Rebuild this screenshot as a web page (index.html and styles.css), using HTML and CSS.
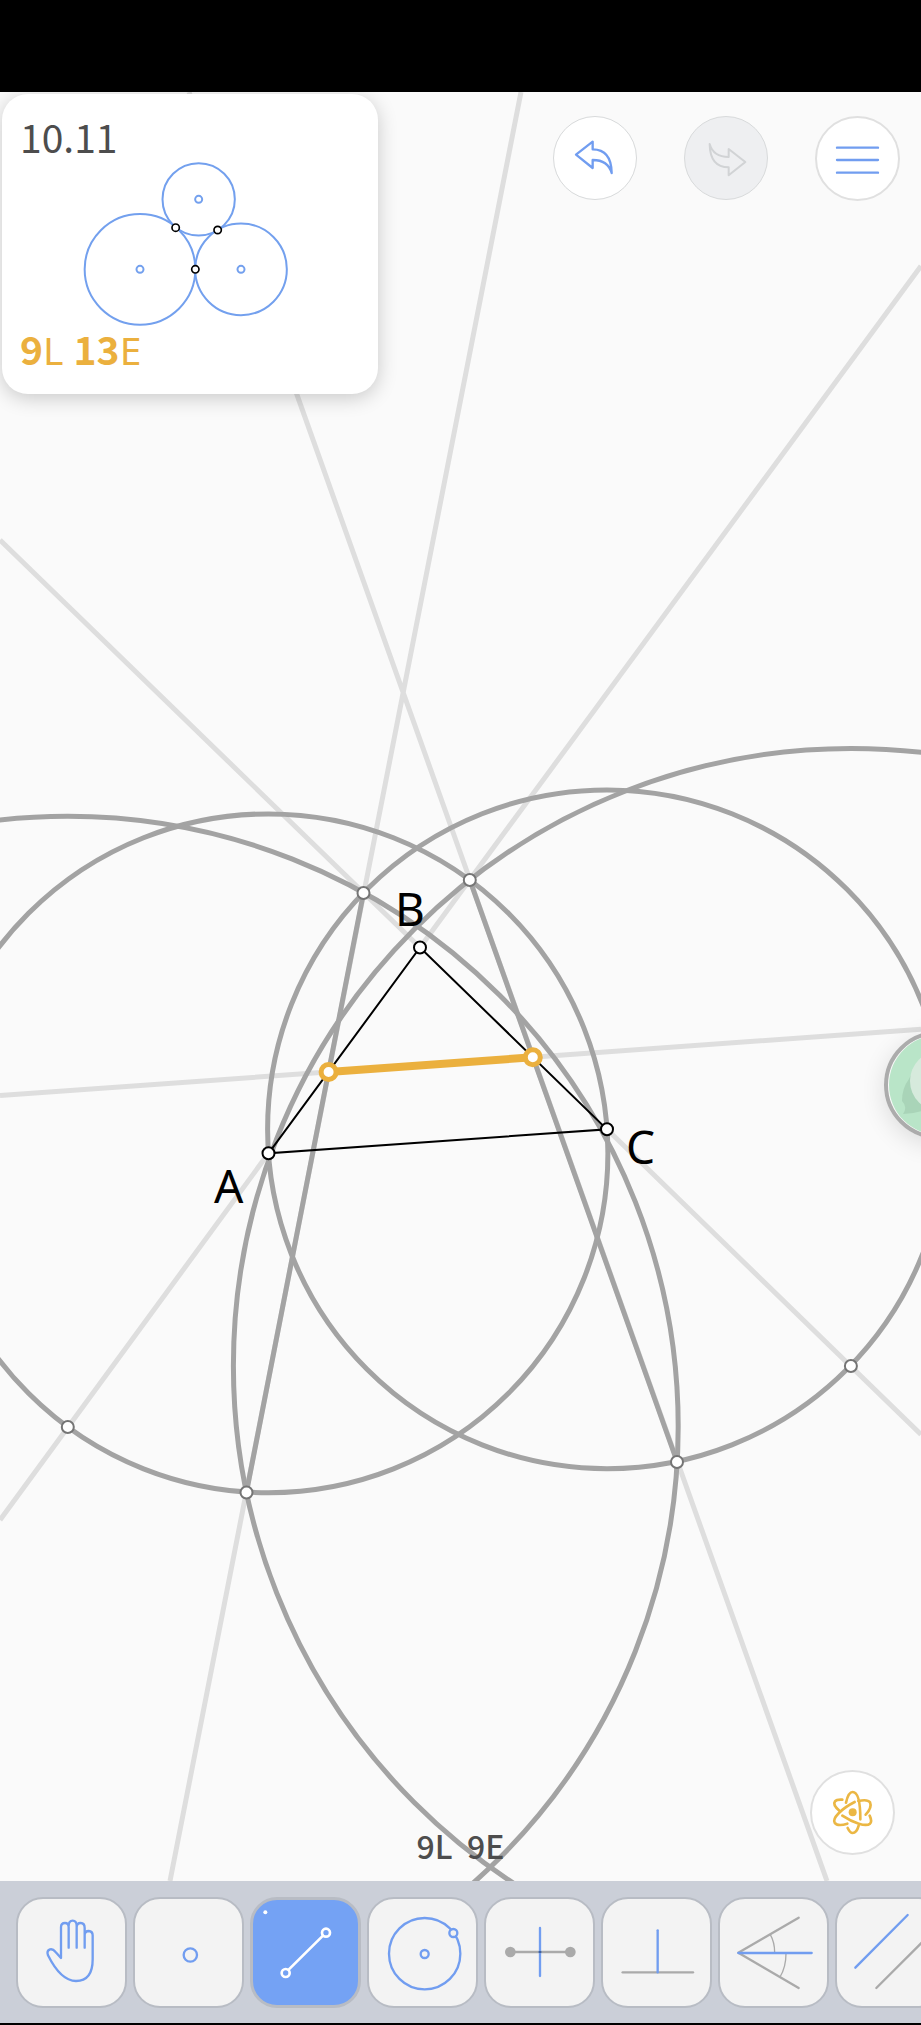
FILE: index.html
```html
<!DOCTYPE html>
<html lang="en">
<head>
<meta charset="utf-8">
<meta name="viewport" content="width=device-width, initial-scale=1">
<title>10.11</title>
<link rel="stylesheet" href="styles.css">
</head>
<body>
<header class="status-bar"></header>
<main class="stage">
  <svg class="drawing" viewBox="0 92 921 1789" preserveAspectRatio="xMidYMid slice" role="img" aria-label="Geometric construction on triangle ABC">
    <g class="guide">
      <path d="M521 92L170 1881M189 92L827 1881M0 540L420 947.500M607 1129.300L921 1434.500M921 266L420 947.500M268.500 1153.300L0 1520M0 1095.600L921 1029.300"/>
    </g>
    <g class="construct">
      <circle cx="268.500" cy="1153.300" r="339.400"/>
      <circle cx="607" cy="1129.300" r="339.400"/>
      <circle cx="850.900" cy="1365.900" r="617.500"/>
      <circle cx="67.800" cy="1426.600" r="610.400"/>
      <path d="M363.500 893L246.500 1492M469.800 880L677 1461.500"/>
    </g>
    <path class="triangle" d="M268.500 1153.300L420 947.500L607 1129.300Z"/>
    <path class="answer" d="M328.600 1072L532.800 1057.300"/>
    <g class="helper-point">
      <circle cx="363.500" cy="893" r="6"/>
      <circle cx="469.800" cy="880" r="6"/>
      <circle cx="246.500" cy="1492.500" r="6"/>
      <circle cx="677" cy="1462" r="6"/>
      <circle cx="67.800" cy="1427" r="6"/>
      <circle cx="850.900" cy="1366" r="6"/>
    </g>
    <g class="given-point">
      <circle cx="268.500" cy="1153.300" r="6"/>
      <circle cx="420" cy="947.500" r="6"/>
      <circle cx="607" cy="1129.300" r="6"/>
    </g>
    <g class="answer-point">
      <circle cx="328.600" cy="1072" r="7.500"/>
      <circle cx="532.800" cy="1057.300" r="7.500"/>
    </g>
    <g class="label">
      <text x="214" y="1203">A</text>
      <text x="395" y="926">B</text>
      <text x="626" y="1164">C</text>
    </g>
  </svg>

  <div class="hud">
    <div class="top-row">
      <section class="goal">
        <h1 class="goal-title">10.11</h1>
        <svg class="goal-figure" viewBox="60 240 1020 510" aria-hidden="true">
          <g class="fig-line">
            <circle cx="596" cy="358" r="108.500"/>
            <circle cx="420" cy="568" r="166"/>
            <circle cx="723" cy="568" r="137.500"/>
            <circle cx="596" cy="358" r="10.500"/>
            <circle cx="420" cy="568" r="10.500"/>
            <circle cx="723" cy="568" r="10.500"/>
          </g>
          <g class="fig-touch">
            <circle cx="527" cy="443" r="11"/>
            <circle cx="653" cy="450" r="11"/>
            <circle cx="586" cy="568" r="11"/>
          </g>
        </svg>
        <p class="goal-cost"><b>9</b>L <b>13</b>E</p>
      </section>
      <nav class="actions" aria-label="Actions">
        <button class="round" type="button" aria-label="Undo">
          <svg class="round-icon" viewBox="97 108 252 252" aria-hidden="true"><path class="blue" d="M166 224L216 185V208Q272 208 273 279Q262 240 216 240V264Z"/></svg>
        </button>
        <button class="round round-off" type="button" aria-label="Redo" disabled>
          <svg class="round-icon" viewBox="493 108 252 252" aria-hidden="true"><path class="pale" d="M677 246L627 207V231Q581 231 570 192Q571 262 627 262V286Z"/></svg>
        </button>
        <button class="round round-thick" type="button" aria-label="Menu">
          <svg class="round-icon" viewBox="885 107 255 255" aria-hidden="true"><path class="blue" d="M951 202H1074M951 239H1074M951 277H1074"/></svg>
        </button>
      </nav>
    </div>
    <div class="bottom-row">
      <p class="score">9L  9E</p>
      <button class="round round-thick explore" type="button" aria-label="Explore">
        <svg class="round-icon" viewBox="90 90 255 255" aria-hidden="true">
          <circle class="gold-dot" cx="218" cy="217" r="12"/>
          <g class="gold">
            <path d="M198 188Q205 156 218 156C234 156 241 184 241 238M236 257Q230 279 218 279Q210 279 203 264"/>
            <path d="M224 186C184 206 156 235 164 248Q172 260 202 251M257 224Q277 203 270 187Q263 177 235 183"/>
            <path d="M187 227C220 249 258 261 270 251Q277 244 269 227M179 213Q157 195 165 184Q170 178 187 179"/>
          </g>
        </svg>
      </button>
    </div>
  </div>
  <button class="bubble" type="button" aria-label="Floating assistant">
    <svg class="bubble-icon" viewBox="0 0 108 108" aria-hidden="true">
      <circle cx="54" cy="54" r="52" fill="#fafafa" stroke="#acacac" stroke-width="4"/>
      <circle cx="55" cy="54" r="50" fill="#b9e5c8"/>
      <path d="M25 48A26 26 0 1 1 38 80Q29 83 19 83Q24 76 18 70Q18 57 25 48Z" fill="#a9d4b8"/>
      <circle cx="56" cy="50" r="30" fill="#d6eadc"/>
    </svg>
  </button>
</main>

<nav class="toolbar" aria-label="Tools">
  <button class="tool" type="button" aria-label="Move">
    <svg class="tool-icon" viewBox="57 90 315 315" aria-hidden="true"><path class="blue" d="M183 264V172Q183 159 195 159Q206 159 206 172V233M206 168Q206 152 218 152Q230 152 230 168V233M230 172Q230 159 242 159Q254 159 254 174V233M254 194Q255 183 266 183Q278 184 278 196V268C278 314 258 333 228 333C188 333 158 284 144 256Q139 242 150 238Q159 236 166 245L183 264"/></svg>
  </button>
  <button class="tool" type="button" aria-label="Point">
    <svg class="tool-icon" viewBox="408 90 315 315" aria-hidden="true"><circle class="blue" cx="571" cy="255" r="20"/></svg>
  </button>
  <button class="tool tool-on" type="button" aria-label="Line" aria-pressed="true">
    <svg class="tool-icon" viewBox="39 90 315 315" aria-hidden="true"><circle cx="76" cy="127" r="6" fill="#fff"/><path class="white" d="M146 299L249 197"/><circle class="white" cx="137" cy="309" r="12"/><circle class="white" cx="258" cy="188" r="12"/></svg>
  </button>
  <button class="tool" type="button" aria-label="Circle">
    <svg class="tool-icon" viewBox="390 90 315 315" aria-hidden="true"><circle class="blue" cx="554" cy="251" r="107"/><circle class="blue" cx="554" cy="252" r="12"/><circle class="blue knob" cx="640" cy="189" r="12"/></svg>
  </button>
  <button class="tool" type="button" aria-label="Perpendicular bisector">
    <svg class="tool-icon" viewBox="741 90 315 315" aria-hidden="true"><path class="gray" d="M812 246H991"/><circle cx="811" cy="246" r="16" fill="#aaa"/><circle cx="991" cy="246" r="16" fill="#aaa"/><path class="blue" d="M900 174V318"/><path d="M896 246H904" stroke="#3f62a0" stroke-width="6"/></svg>
  </button>
  <button class="tool" type="button" aria-label="Perpendicular">
    <svg class="tool-icon" viewBox="72 90 315 315" aria-hidden="true"><path class="gray" d="M128 307H339"/><path class="blue" d="M233 181V307"/></svg>
  </button>
  <button class="tool" type="button" aria-label="Angle bisector">
    <svg class="tool-icon" viewBox="423 90 315 315" aria-hidden="true"><path class="gray" d="M656 143L475 248L656 354"/><path class="gray thin" d="M571 194Q584 217 584 248M618 250Q618 292 600 321"/><path class="blue" d="M475 249H695"/></svg>
  </button>
  <button class="tool" type="button" aria-label="Parallel">
    <svg class="tool-icon" viewBox="774 90 315 315" aria-hidden="true"><path class="blue" d="M826 293L983 135"/><path class="gray" d="M889 354L1047 196"/></svg>
  </button>
</nav>
<footer class="bottom-edge"></footer>
</body>
</html>
```
FILE: styles.css
```css
* {
  box-sizing: border-box;
}

body {
  margin: 0;
  min-height: 100vh;
  display: flex;
  flex-direction: column;
  overflow-x: hidden;
  background: #fafafa;
  color: #4d4d4d;
  font-family: "Noto Sans CJK KR", "Noto Sans", sans-serif;
}

h1,
p {
  margin: 0;
}

button {
  padding: 0;
  flex: none;
  font: inherit;
}

svg {
  display: block;
}

.status-bar {
  height: 92px;
  background: #000;
}

.stage {
  position: relative;
  flex: 1;
  display: flex;
  min-height: 600px;
  overflow: hidden;
  background: #fafafa;
}

/* Construction */
.drawing {
  position: absolute;
  inset: 0;
  width: 100%;
  height: 100%;
  fill: none;
}

.guide {
  stroke: #dedede;
  stroke-width: 5px;
}

.construct {
  stroke: #a3a3a3;
  stroke-width: 5px;
}

.triangle {
  stroke: #000;
  stroke-width: 2px;
}

.answer {
  stroke: #ebb03e;
  stroke-width: 8px;
}

.helper-point {
  fill: #fff;
  stroke: #757575;
  stroke-width: 2px;
}

.given-point {
  fill: #fff;
  stroke: #000;
  stroke-width: 2px;
}

.answer-point {
  fill: #fff;
  stroke: #ebb03e;
  stroke-width: 5px;
}

.label {
  fill: #000;
  font-family: "Noto Sans", sans-serif;
  font-size: 46px;
}

/* Overlay */
.hud {
  position: relative;
  flex: 1;
  display: flex;
  flex-direction: column;
  justify-content: space-between;
}

.top-row {
  display: flex;
  justify-content: space-between;
  align-items: flex-start;
  padding: 2px 21px 0 2px;
}

.goal {
  width: 376px;
  height: 300px;
  padding: 19px 18px;
  border-radius: 26px;
  background: #fff;
  box-shadow: 0 4px 20px rgba(0, 0, 0, 0.2);
}

.goal-title {
  font-size: 39px;
  font-weight: 400;
  line-height: 47px;
}

.goal-figure {
  width: 100%;
  height: 170px;
}

.fig-line,
.fig-touch {
  fill: none;
  stroke: #73a0ee;
  stroke-width: 6px;
}

.fig-touch {
  fill: #fff;
  stroke: #000;
  stroke-width: 5px;
}

.goal-cost {
  color: #ebb03e;
  font-family: "Noto Sans", sans-serif;
  font-size: 39px;
  line-height: 36px;
}

.goal-cost b {
  font-family: "Noto Sans CJK KR", sans-serif;
  font-weight: 700;
}

.actions {
  display: flex;
  gap: 47px;
  padding-top: 22px;
}

.round {
  width: 84px;
  height: 84px;
  border: 1px solid #d8dadb;
  border-radius: 50%;
  background: #fff;
}

.round-off {
  background: #eeeff1;
}

.round-thick {
  width: 85px;
  height: 85px;
  border: 2px solid #e0e0e0;
}

.round-icon {
  width: 84px;
  height: 84px;
  margin: -1px;
}

.round-thick .round-icon {
  width: 85px;
  height: 85px;
  margin: -2px;
}

.blue,
.pale,
.gray,
.white,
.gold {
  fill: none;
  stroke-linecap: round;
  stroke-linejoin: round;
}

.blue {
  stroke: #719df0;
  stroke-width: 7px;
}

.pale {
  stroke: #d1d3d5;
  stroke-width: 6px;
}

.gray {
  stroke: #aaa;
  stroke-width: 7px;
}

.thin {
  stroke-width: 4px;
}

.white {
  stroke: #fff;
  stroke-width: 8px;
}

.gold {
  stroke: #ebb744;
  stroke-width: 8px;
}

.gold-dot {
  fill: #ebb744;
}

.knob {
  fill: #f2f2f2;
}

.bottom-row {
  display: grid;
  grid-template-columns: 1fr auto 1fr;
  align-items: end;
  padding: 0 26px;
}

.score {
  grid-column: 2;
  padding-bottom: 16px;
  font-size: 32px;
  font-weight: 500;
  line-height: 40px;
  white-space: pre;
}

.explore {
  justify-self: end;
  margin-bottom: 26px;
}

.bubble {
  position: absolute;
  right: -71px;
  top: 939px;
  width: 108px;
  height: 108px;
  border: 0;
  border-radius: 50%;
  background: none;
  box-shadow: 0 6px 24px rgba(0, 0, 0, 0.12);
}

.bubble-icon {
  width: 100%;
  height: 100%;
}

/* Tool strip */
.toolbar {
  display: flex;
  gap: 6px;
  height: 142px;
  padding: 16px;
  overflow-x: auto;
  scrollbar-width: none;
  background: #cbcfd8;
}

.tool {
  width: 111px;
  height: 111px;
  border: 2px solid #b8bcc4;
  border-radius: 27px;
  background: #f3f3f3;
}

.tool-icon {
  width: 105px;
  height: 105px;
  margin: 1px;
}

.tool-on {
  border-width: 3px;
  background: #74a2f4;
}

.tool-on .tool-icon {
  margin: 0;
}

.bottom-edge {
  height: 2px;
  background: #000;
}
```
